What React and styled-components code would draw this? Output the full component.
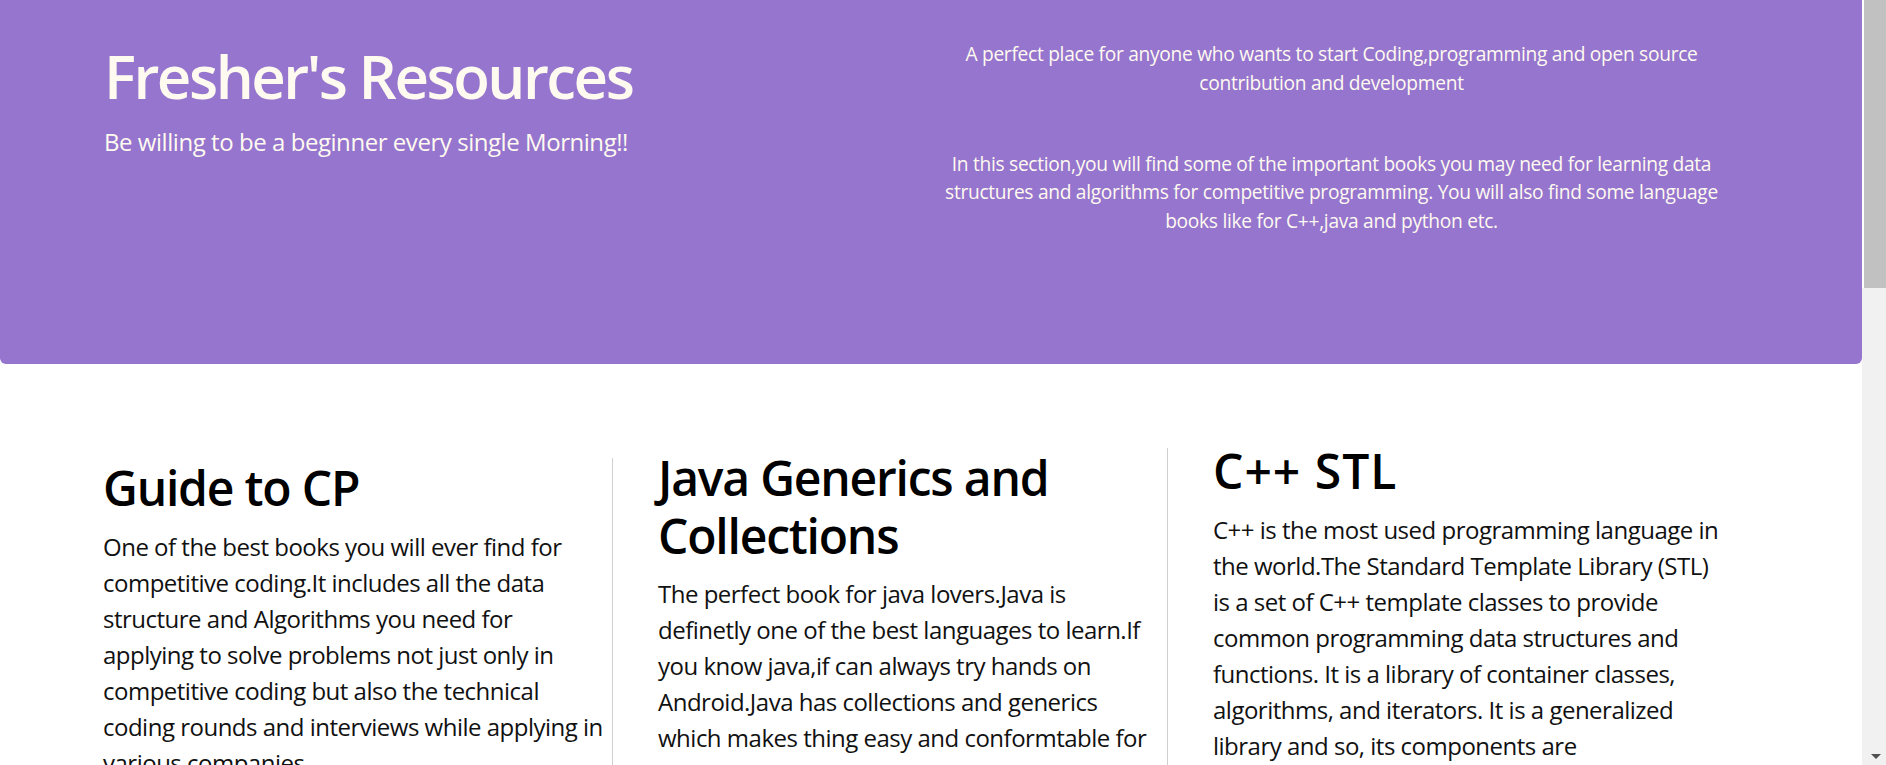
import React from 'react';
import styled, { createGlobalStyle } from 'styled-components';

const GlobalStyle = createGlobalStyle`
  body {
    margin: 0;
    background: #fff;
    font-family: "Open Sans", "Noto Sans", sans-serif;
    color: #111;
  }
`;

const Viewport = styled.div`
  display: flex;
  align-items: flex-start;
`;

const Page = styled.div`
  flex: 1;
  min-width: 0;
`;

const ScrollTrack = styled.div`
  width: 24px;
  height: 100vh;
  flex-shrink: 0;
  display: flex;
  flex-direction: column;
  background: #f1f1f1;
`;

const ScrollThumb = styled.div`
  height: 288px;
  box-sizing: border-box;
  border-left: 2px solid #fff;
  background: #c1c1c1;
`;

const ScrollArrow = styled.div`
  margin-top: auto;
  height: 18px;
  display: flex;
  align-items: center;
  justify-content: center;
  padding-left: 3px;

  &::after {
    content: '';
    border-left: 5px solid transparent;
    border-right: 5px solid transparent;
    border-top: 5px solid #505050;
  }
`;

const Jumbotron = styled.header`
  display: grid;
  grid-template-columns: 1fr 1fr;
  height: 364px;
  box-sizing: border-box;
  padding-top: 40px;
  background: #9575cd;
  border-radius: 0 0 6px 6px;
  color: #fffaf0;
`;

const Intro = styled.div`
  padding-left: 104px;
`;

const Title = styled.h1`
  margin: 0;
  font-size: 60px;
  line-height: 72px;
  font-weight: 600;
  letter-spacing: -2.5px;
`;

const Lead = styled.p`
  margin: 12px 0 0;
  font-size: 24px;
  line-height: 36px;
  letter-spacing: -0.45px;
`;

const About = styled.div`
  padding-right: 130px;
  text-align: center;
`;

const Blurb = styled.p`
  margin: ${(p) => (p.spaced ? '52px' : '0')} 0 0;
  font-size: 19.2px;
  line-height: 28.8px;
  letter-spacing: -0.3px;
`;

const Shelf = styled.main`
  display: flex;
  align-items: flex-start;
  padding: 77px 0 0 58px;
`;

const Book = styled.section`
  width: 555px;
  box-sizing: border-box;
  margin-top: ${(p) => p.offset}px;
  padding: 1px ${(p) => p.trim}px 0 45px;
  border-right: ${(p) => (p.divided ? '1px solid #d0d0d0' : 'none')};
`;

const BookTitle = styled.h2`
  margin: 0 0 12px;
  font-size: 48px;
  line-height: 57.6px;
  font-weight: 600;
  letter-spacing: ${(p) => p.tracking}px;
  color: #000;
`;

const BookText = styled.p`
  margin: 0;
  font-size: 24px;
  line-height: 36px;
  letter-spacing: -0.5px;
`;

const books = [
  {
    title: 'Guide to CP',
    offset: 17,
    trim: 8,
    tracking: -1.2,
    divided: true,
    text: 'One of the best books you will ever find for competitive coding.It includes all the data structure and Algorithms you need for applying to solve problems not just only in competitive coding but also the technical coding rounds and interviews while applying in various companies.',
  },
  {
    title: 'Java Generics and Collections',
    offset: 7,
    trim: 4,
    tracking: -1.2,
    divided: true,
    text: 'The perfect book for java lovers.Java is definetly one of the best languages to learn.If you know java,if can always try hands on Android.Java has collections and generics which makes thing easy and conformtable for coders as well as good performance.',
  },
  {
    title: 'C++ STL',
    offset: 0,
    trim: 0,
    tracking: 1,
    divided: false,
    text: 'C++ is the most used programming language in the world.The Standard Template Library (STL) is a set of C++ template classes to provide common programming data structures and functions. It is a library of container classes, algorithms, and iterators. It is a generalized library and so, its components are parameterized.',
  },
];

const App = () => {
  return (
    <Viewport>
      <GlobalStyle />
      <Page>
        <Jumbotron>
          <Intro>
            <Title>Fresher's Resources</Title>
            <Lead>Be willing to be a beginner every single Morning!!</Lead>
          </Intro>
          <About>
            <Blurb>
              A perfect place for anyone who wants to start Coding,programming and open source contribution and development
            </Blurb>
            <Blurb spaced>
              In this section,you will find some of the important books you may need for learning data structures and algorithms for competitive programming. You will also find some language books like for C++,java and python etc.
            </Blurb>
          </About>
        </Jumbotron>
        <Shelf>
          {books.map((b) => (
            <Book key={b.title} offset={b.offset} trim={b.trim} divided={b.divided}>
              <BookTitle tracking={b.tracking}>{b.title}</BookTitle>
              <BookText>{b.text}</BookText>
            </Book>
          ))}
        </Shelf>
      </Page>
      <ScrollTrack>
        <ScrollThumb />
        <ScrollArrow />
      </ScrollTrack>
    </Viewport>
  );
};

export default App;
